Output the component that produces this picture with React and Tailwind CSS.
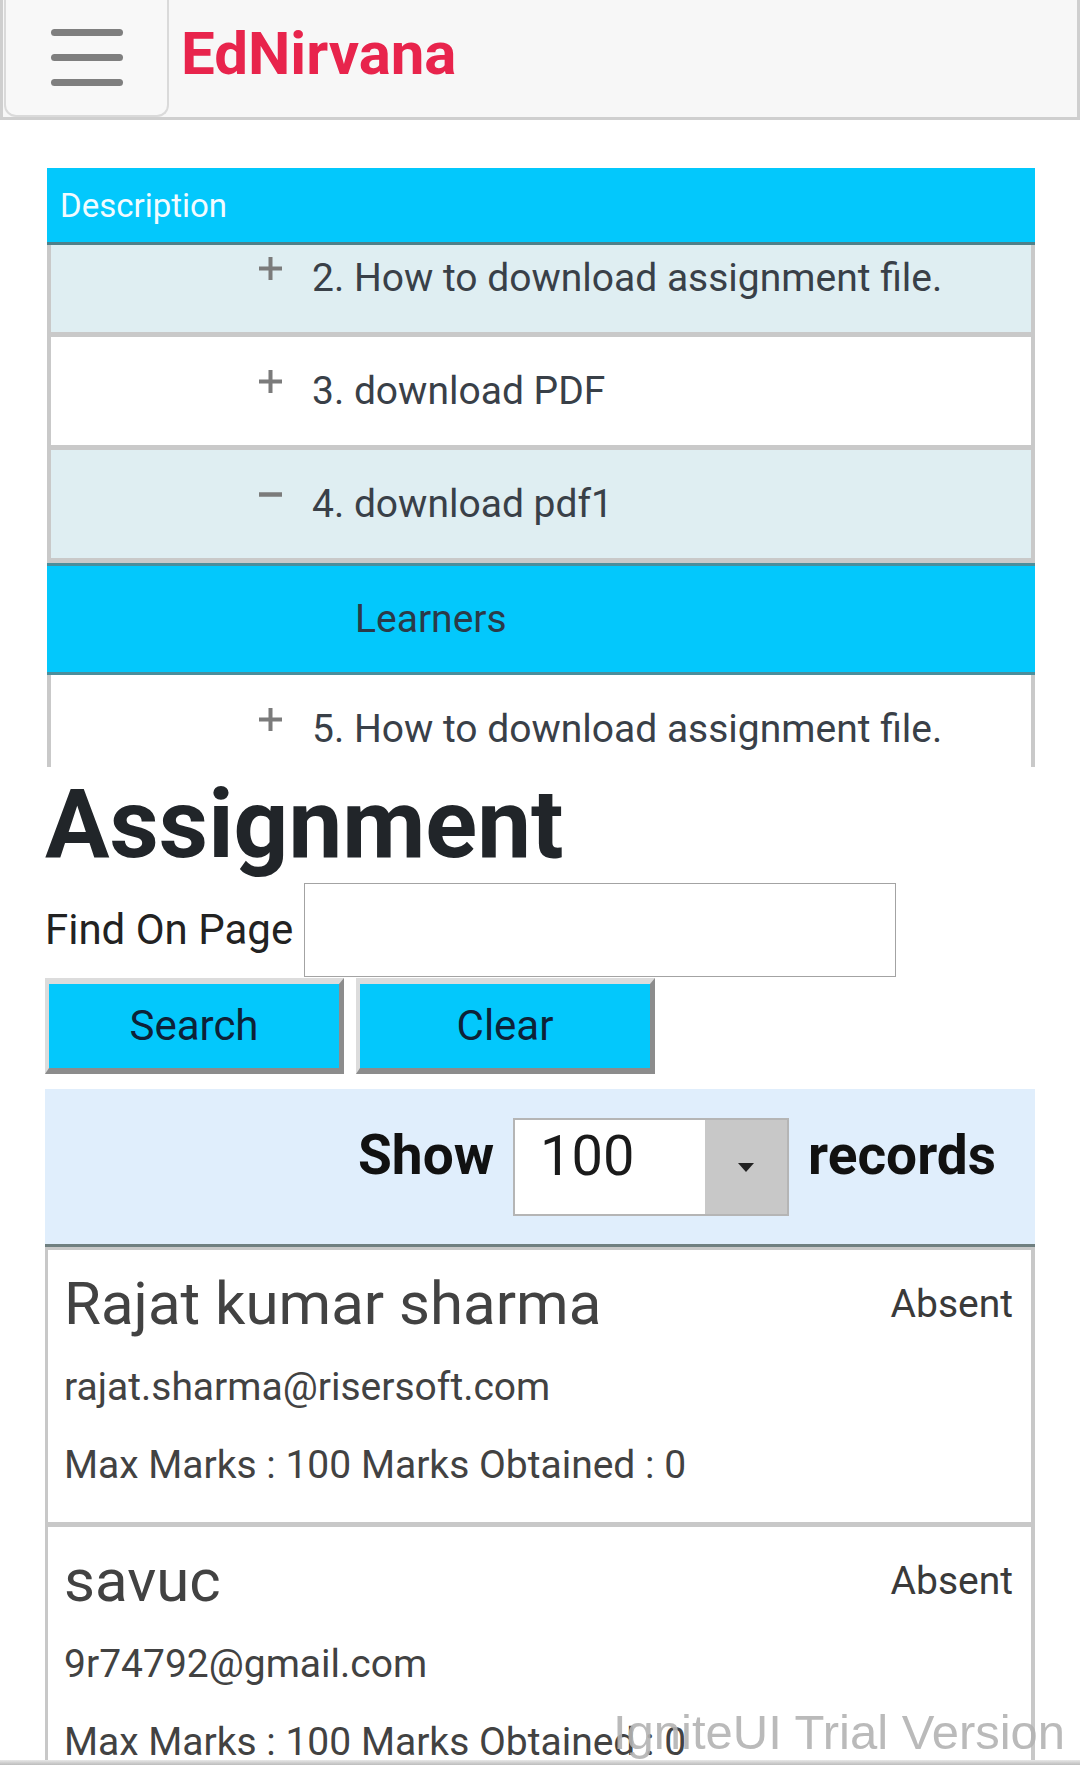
import React from 'react';

const lessons = [
  { id: 2, title: '2. How to download assignment file.', open: false, tint: true },
  { id: 3, title: '3. download PDF', open: false, tint: false },
  { id: 4, title: '4. download pdf1', open: true, tint: true },
  { id: 5, title: '5. How to download assignment file.', open: false, tint: false },
];

const learners = [
  { name: 'Rajat kumar sharma', email: 'rajat.sharma@risersoft.com', status: 'Absent', max: 100, obtained: 0 },
  { name: 'savuc', email: '9r74792@gmail.com', status: 'Absent', max: 100, obtained: 0 },
];

const ToggleIcon = ({ open }) => (
  <svg width="25" height="25" viewBox="0 0 25 25" className="-mt-[20px] shrink-0">
    {open ? (
      <path d="M1 12.5h23" stroke="#7b7b7b" strokeWidth="4.5" />
    ) : (
      <path d="M12.5 1v23M1 12.5h23" stroke="#7b7b7b" strokeWidth="4" />
    )}
  </svg>
);

const LessonRow = ({ lesson }) => (
  <>
    <div
      className={`flex h-[113px] items-center border-x-4 border-b-[5px] border-[#c9c9c9] pl-[207px] ${
        lesson.tint ? 'bg-[#dfeef2]' : 'bg-white'
      }`}
    >
      <ToggleIcon open={lesson.open} />
      <span className="ml-[29px] text-[39px] leading-none text-[#394048]">{lesson.title}</span>
    </div>
    {lesson.open && (
      <div className="flex h-[112px] items-center border-y-[3px] border-[#4b8e9c] bg-[#03c8fc] pl-[308px] text-[39px] leading-none text-[#2b3a48]">
        Learners
      </div>
    )}
  </>
);

const LearnerCard = ({ learner, first }) => (
  <div
    className={`border-l-[3px] border-r-4 border-b-[5px] border-[#c8c8c8] bg-white pl-[16px] pr-[18px] pt-[24px] pb-[37px] text-[#424242] ${
      first ? 'border-t-[3px]' : ''
    }`}
  >
    <div className="flex items-start justify-between">
      <span className="text-[60px] leading-none">{learner.name}</span>
      <span className="mt-[11px] text-[39px] leading-none text-[#3a3a3a]">{learner.status}</span>
    </div>
    <p className="mt-[34px] text-[39px] leading-none">{learner.email}</p>
    <p className="mt-[39px] text-[39px] leading-none">
      Max Marks : {learner.max} Marks Obtained : {learner.obtained}
    </p>
  </div>
);

export default function App() {
  return (
    <div className="relative h-[1765px] overflow-hidden bg-white font-['Roboto',sans-serif]">
      {/* top bar */}
      <header className="flex h-[120px] border-x-[3px] border-b-[3px] border-[#cfcfcf] bg-[#f7f7f7]">
        <button className="ml-[1px] flex h-[117px] w-[165px] flex-col items-center justify-center gap-[18px] rounded-b-[12px] border-2 border-t-0 border-[#dadada] bg-[#f8f8f8]">
          <span className="block h-[7px] w-[72px] rounded-full bg-[#7f7f7f]" />
          <span className="block h-[7px] w-[72px] rounded-full bg-[#7f7f7f]" />
          <span className="block h-[7px] w-[72px] rounded-full bg-[#7f7f7f]" />
        </button>
        <span className="ml-[12px] pt-[24px] text-[60px] font-bold leading-none text-[#e8244c]">EdNirvana</span>
      </header>

      <main className="px-[45px] pt-[48px]">
        {/* lessons accordion */}
        <section className="pl-[2px]">
          <div className="flex h-[77px] items-center border-b-[3px] border-[#4f808a] bg-[#03c8fc] pl-[13px] text-[33px] leading-none text-[#f2fbff]">
            Description
          </div>
          <div className="h-[522px] overflow-hidden">
            <div className="-mt-[21px]">
              {lessons.map((l) => (
                <LessonRow key={l.id} lesson={l} />
              ))}
            </div>
          </div>
        </section>

        <h1 className="mt-[9px] text-[96px] font-bold leading-none text-[#212529]">Assignment</h1>

        <div className="mt-[11px] flex items-center gap-[11px]">
          <label className="text-[42px] leading-none text-[#222]">Find On Page</label>
          <input className="h-[94px] w-[592px] border border-[#a3a3a3] bg-white" />
        </div>

        <div className="mt-[1px] flex gap-[12px]">
          {['Search', 'Clear'].map((b) => (
            <button
              key={b}
              className="h-[96px] w-[299px] border-t-[6px] border-l-[4px] border-r-[5px] border-b-[6px] border-t-[#dcdcdc] border-l-[#dcdcdc] border-r-[#8c8c8c] border-b-[#8c8c8c] bg-[#03c8fc] text-[42px] leading-none text-[#0d2237]"
            >
              {b}
            </button>
          ))}
        </div>

        {/* records selector */}
        <div className="mt-[15px] flex h-[158px] items-center justify-end gap-[19px] border-b-[3px] border-[#6f7f80] bg-[#e0eefc] pr-[39px]">
          <span className="-mt-[22px] text-[55px] font-bold leading-none text-[#111]">Show</span>
          <div className="flex h-[98px] w-[276px] border-2 border-[#b5b5b5]">
            <div className="flex flex-1 items-center bg-white pb-[22px] pl-[25px] text-[56px] leading-none text-[#1a1a1a]">100</div>
            <div className="flex w-[82px] items-center justify-center bg-[#c8c8c8]">
              <span className="mt-[2px] h-0 w-0 border-x-[8px] border-t-[9px] border-x-transparent border-t-[#222]" />
            </div>
          </div>
          <span className="-mt-[22px] text-[55px] font-bold leading-none text-[#111]">records</span>
        </div>

        {learners.map((l, i) => (
          <LearnerCard key={l.email} learner={l} first={i === 0} />
        ))}
      </main>

      <span className="absolute left-[613px] top-[1708px] whitespace-nowrap font-['Liberation_Sans',sans-serif] text-[49px] leading-none text-[#b3b3b3] opacity-90 blur-[0.6px]">
        IgniteUI Trial Version
      </span>
      <div className="absolute bottom-0 left-0 right-0 h-[5px] bg-linear-to-b from-[#e8e8e8] to-[#bcbcbc]" />
    </div>
  );
}
